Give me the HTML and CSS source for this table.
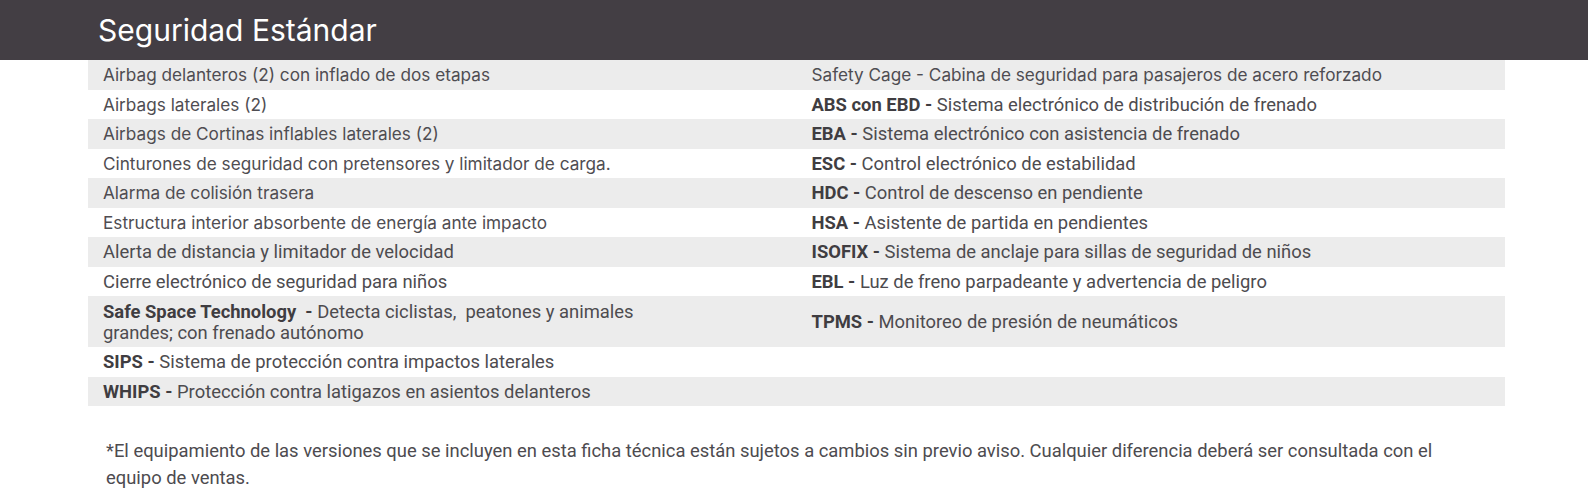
FILE: index.html
```html
<!DOCTYPE html>
<html lang="es">
<head>
<meta charset="utf-8">
<title>Seguridad Estándar</title>
<link rel="stylesheet" href="styles.css">
</head>
<body>
<header class="bar">
  <h1 class="title">Seguridad Estándar</h1>
</header>
<table class="spec">
  <tbody>
    <tr class="shade">
      <td class="wide">Airbag delanteros (2) con inflado de dos etapas</td>
      <td class="wide cage">Safety Cage - Cabina de seguridad para pasajeros de acero reforzado</td>
    </tr>
    <tr>
      <td class="wide">Airbags laterales (2)</td>
      <td class="narrow"><b>ABS con EBD -</b> Sistema electrónico de distribución de frenado</td>
    </tr>
    <tr class="shade">
      <td class="wide">Airbags de Cortinas inflables laterales (2)</td>
      <td class="narrow"><b>EBA -</b> Sistema electrónico con asistencia de frenado</td>
    </tr>
    <tr>
      <td class="wide">Cinturones de seguridad con pretensores y limitador de carga.</td>
      <td class="narrow"><b>ESC -</b> Control electrónico de estabilidad</td>
    </tr>
    <tr class="shade">
      <td class="wide">Alarma de colisión trasera</td>
      <td class="narrow"><b>HDC -</b> Control de descenso en pendiente</td>
    </tr>
    <tr>
      <td class="wide">Estructura interior absorbente de energía ante impacto</td>
      <td class="narrow"><b>HSA -</b> Asistente de partida en pendientes</td>
    </tr>
    <tr class="shade">
      <td class="narrow">Alerta de distancia y limitador de velocidad</td>
      <td class="narrow"><b>ISOFIX -</b> Sistema de anclaje para sillas de seguridad de niños</td>
    </tr>
    <tr>
      <td class="narrow">Cierre electrónico de seguridad para niños</td>
      <td class="narrow"><b>EBL -</b> Luz de freno parpadeante y advertencia de peligro</td>
    </tr>
    <tr class="shade tall">
      <td class="narrow two"><b>Safe Space Technology</b>&nbsp; <b>-</b> Detecta ciclistas,&nbsp; peatones y animales<br>grandes; con frenado autónomo</td>
      <td class="narrow"><b>TPMS -</b> Monitoreo de presión de neumáticos</td>
    </tr>
    <tr>
      <td class="narrow"><b>SIPS -</b> Sistema de protección contra impactos laterales</td>
      <td class="narrow"></td>
    </tr>
    <tr class="shade">
      <td class="narrow"><b>WHIPS -</b> Protección contra latigazos en asientos delanteros</td>
      <td class="narrow"></td>
    </tr>
  </tbody>
</table>
<p class="note">*El equipamiento de las versiones que se incluyen en esta ficha técnica están sujetos a cambios sin previo aviso. Cualquier diferencia deberá ser consultada con el equipo de ventas.</p>
</body>
</html>
```

FILE: styles.css
```css
html, body {
  margin: 0;
  padding: 0;
  background: #ffffff;
}

body {
  width: 1588px;
  color: #4d4b4f;
  font-family: Inter, Lato, sans-serif;
}

.bar {
  height: 60px;
  background: #433e44;
  display: flex;
  align-items: center;
  padding-left: 98px;
}

.title {
  margin: 0;
  font-family: Inter, Lato, sans-serif;
  font-weight: 400;
  font-size: 30px;
  color: #ffffff;
  letter-spacing: 0;
}

.spec {
  margin-left: 88px;
  width: 1417px;
  border-collapse: collapse;
  table-layout: fixed;
}

.spec tr {
  height: 29.5px;
}

.spec tr.tall {
  height: 51px;
}

.spec tr.shade {
  background: #ececec;
}

.spec td {
  padding: 0 0 0 15px;
  vertical-align: middle;
  width: 50%;
}

.wide {
  font-family: Inter, Lato, sans-serif;
  font-size: 17.2px;
  color: #4f4d52;
}

.narrow {
  font-family: Roboto, sans-serif;
  font-size: 18.4px;
}

.cage {
  padding-left: 17px;
}

.narrow b {
  font-weight: 700;
  color: #3f3d41;
}

.two {
  line-height: 21px;
}

.note {
  margin: 31px 0 0 106px;
  width: 1360px;
  font-family: Roboto, sans-serif;
  font-size: 18.4px;
  line-height: 27px;
}
```
